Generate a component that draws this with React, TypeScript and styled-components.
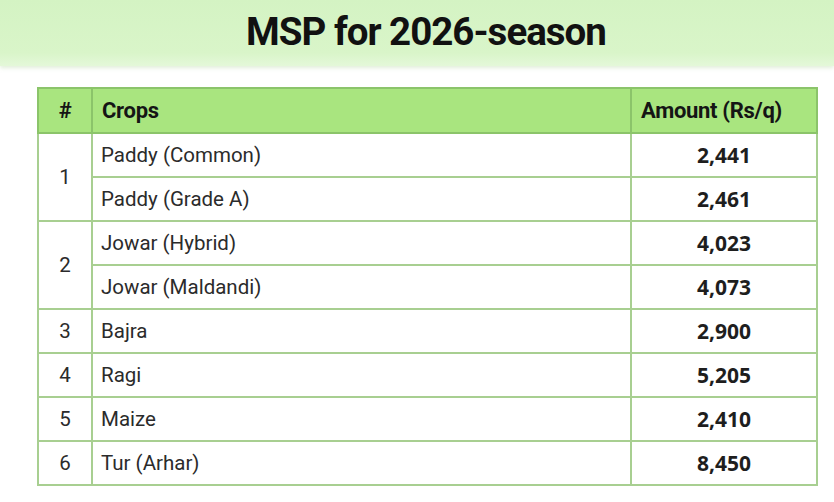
import styled, { createGlobalStyle } from 'styled-components';

interface Crop {
  name: string;
  amount: string;
}

interface Group {
  no: number;
  crops: Crop[];
}

const groups: Group[] = [
  {
    no: 1,
    crops: [
      { name: 'Paddy (Common)', amount: '2,441' },
      { name: 'Paddy (Grade A)', amount: '2,461' },
    ],
  },
  {
    no: 2,
    crops: [
      { name: 'Jowar (Hybrid)', amount: '4,023' },
      { name: 'Jowar (Maldandi)', amount: '4,073' },
    ],
  },
  { no: 3, crops: [{ name: 'Bajra', amount: '2,900' }] },
  { no: 4, crops: [{ name: 'Ragi', amount: '5,205' }] },
  { no: 5, crops: [{ name: 'Maize', amount: '2,410' }] },
  { no: 6, crops: [{ name: 'Tur (Arhar)', amount: '8,450' }] },
];

export default function App() {
  return (
    <>
      <GlobalStyle />
      <Page>
        <Banner>
          <Title>MSP for 2026-season</Title>
        </Banner>
        <Sheet>
          <Table>
            <colgroup>
              <col style={{ width: 54 }} />
              <col />
              <col style={{ width: 186 }} />
            </colgroup>
            <thead>
              <tr>
                <Th center>#</Th>
                <Th>Crops</Th>
                <Th>Amount (Rs/q)</Th>
              </tr>
            </thead>
            <tbody>
              {groups.map((g) =>
                g.crops.map((c, i) => (
                  <tr key={c.name}>
                    {i === 0 && <IndexCell rowSpan={g.crops.length}>{g.no}</IndexCell>}
                    <NameCell>{c.name}</NameCell>
                    <AmountCell>{c.amount}</AmountCell>
                  </tr>
                ))
              )}
            </tbody>
          </Table>
        </Sheet>
      </Page>
    </>
  );
}

const GlobalStyle = createGlobalStyle`
  html, body {
    margin: 0;
    padding: 0;
    background: #ffffff;
  }
  body {
    font-family: Roboto, 'Noto Sans', sans-serif;
    color: #222;
  }
`;

const Page = styled.div`
  width: 834px;
  height: 502px;
  overflow: hidden;
  background: #ffffff;
`;

const Banner = styled.div`
  height: 66px;
  padding-left: 18px;
  display: flex;
  align-items: center;
  justify-content: center;
  background: linear-gradient(180deg, #d4f3c3 0%, #d9f5c9 80%, #e4f8d9 100%);
  box-shadow: 0 2px 4px rgba(170, 210, 150, 0.35);
`;

const Title = styled.h1`
  margin: 0;
  padding-bottom: 4px;
  font-family: Roboto, 'Noto Sans', sans-serif;
  font-weight: 700;
  font-size: 38.5px;
  letter-spacing: -1px;
  color: #111;
`;

const Sheet = styled.div`
  padding: 21px 0 0 37px;
`;

const Table = styled.table`
  width: 781px;
  border-collapse: collapse;
  table-layout: fixed;
  border: 2px solid #9dc489;
`;

const Th = styled.th<{ center?: boolean }>`
  height: 43px;
  padding: 0 8px 0 ${({ center }) => (center ? '8px' : '9px')};
  background: #a9e57f;
  border: 2px solid #8bc46a;
  text-align: ${({ center }) => (center ? 'center' : 'left')};
  font-family: Roboto, 'Noto Sans', sans-serif;
  font-weight: 700;
  font-size: 22px;
  letter-spacing: -0.3px;
  color: #151515;
`;

const Cell = styled.td`
  height: 42px;
  padding: 0 8px;
  border: 2px solid #a8cf91;
  font-family: Roboto, 'Noto Sans', sans-serif;
  font-size: 20.5px;
  color: #2b2b2b;
`;

const IndexCell = styled(Cell)`
  text-align: center;
`;

const NameCell = styled(Cell)`
  text-align: left;
`;

const AmountCell = styled(Cell)`
  text-align: center;
  font-family: 'Open Sans', Roboto, sans-serif;
  font-weight: 700;
  font-size: 21px;
  color: #1e1e1e;
`;
